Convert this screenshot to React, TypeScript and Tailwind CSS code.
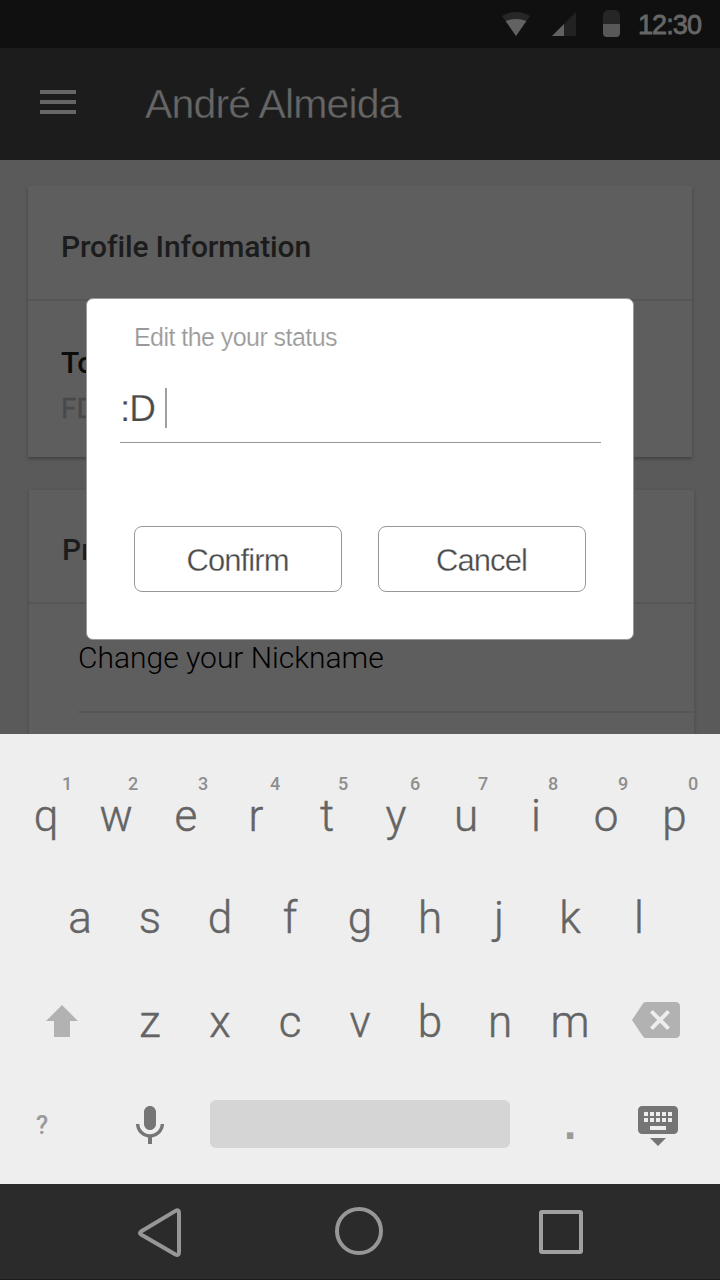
import type { ReactNode } from "react";

const topRow = [
  ["q", "1", "left-[50px]"],
  ["w", "2", "left-[46px]"],
  ["e", "3", "left-[46px]"],
  ["r", "4", "left-[48px]"],
  ["t", "5", "left-[46px]"],
  ["y", "6", "left-[48px]"],
  ["u", "7", "left-[46px]"],
  ["i", "8", "left-[46px]"],
  ["o", "9", "left-[46px]"],
  ["p", "0", "left-[46px]"],
];

function Key({ children, className = "" }: { children: ReactNode; className?: string }) {
  return (
    <div
      className={`relative w-[70px] text-center text-[44px] leading-[102px] font-light text-[#646464] [-webkit-text-stroke:0.45px_#646464] ${className}`}
    >
      {children}
    </div>
  );
}

function StatusBar() {
  return (
    <div className="flex h-12 items-center justify-end bg-[#101010] pr-[18px]">
      <svg width="120" height="48" viewBox="502 0 120 48" className="mr-4">
        <path d="M502 16Q516 8 530 16L516 36Z" fill="#272727" />
        <path d="M505.600 21Q516 17 526.400 21L516 36Z" fill="#626262" />
        <path d="M552 36L576 12V36Z" fill="#222222" />
        <path d="M552 36L564 24V36Z" fill="#626262" />
        <path d="M603 24V16Q603 10 609 10H614Q620 10 620 16V24Z" fill="#262626" />
        <path d="M603 24H620V33Q620 37 616 37H607Q603 37 603 33Z" fill="#585858" />
      </svg>
      <span className="w-[64px] pt-[2px] font-['Liberation_Sans',sans-serif] text-[27px] leading-[46px] tracking-[-0.9px] whitespace-nowrap text-[#666666] [-webkit-text-stroke:0.8px_#666666]">
        12:30
      </span>
    </div>
  );
}

function Keyboard() {
  return (
    <div className="h-[450px] bg-[#eeeeee] pt-[31px]">
      <div className="flex h-[102px] pl-[11px]">
        {topRow.map(([letter, digit, pos]) => (
          <Key key={letter}>
            <span className={letter === "p" ? "mr-[3px]" : letter === "t" ? "ml-[2px]" : ""}>{letter}</span>
            <span
              className={`absolute top-[8px] w-[12px] text-center text-[18px] leading-[22px] font-medium text-[#8e8e8e] [-webkit-text-stroke:0px] ${pos}`}
            >
              {digit}
            </span>
          </Key>
        ))}
      </div>
      <div className="flex h-[102px] pl-[45px]">
        {"asdfghjkl".split("").map((c) => (
          <Key key={c} className={c === "l" || c === "j" ? "pr-[2px]" : ""}>
            {c}
          </Key>
        ))}
      </div>
      <div className="mt-[2px] flex h-[102px] items-center pl-[38px]">
        <svg width="48" height="48" viewBox="0 0 48 48" className="-mt-1 mr-[29px]" fill="#b2b2b2">
          <path d="M24 9L40 25H32V41H16V25H8Z" />
        </svg>
        {"zxcvbnm".split("").map((c) => (
          <Key key={c}>{c}</Key>
        ))}
        <svg width="48" height="48" viewBox="0 0 24 24" className="-mt-1 ml-[27px]" fill="#b2b2b2">
          <path d="M22 3H7c-.69 0-1.23.35-1.59.88L0 12l5.41 8.11c.36.53.9.89 1.59.89h15c1.1 0 2-.9 2-2V5c0-1.1-.9-2-2-2zm-3 12.59L17.59 17 14 13.41 10.41 17 9 15.59 12.59 12 9 8.41 10.41 7 14 10.59 17.59 7 19 8.41 15.41 12 19 15.59z" />
        </svg>
      </div>
      <div className="flex h-[102px] items-center">
        <span className="w-[84px] pt-[3px] text-center text-[25px] font-medium text-[#9a9a9a]">?</span>
        <svg width="48" height="48" viewBox="0 0 24 24" className="mt-1 ml-[42px]" fill="#757575">
          <path d="M12 14c1.66 0 2.99-1.34 2.99-3L15 5c0-1.66-1.34-3-3-3S9 3.34 9 5v6c0 1.66 1.34 3 3 3zm5.3-3c0 3-2.54 5.1-5.3 5.1S6.7 14 6.7 11H5c0 3.41 2.72 6.23 6 6.72V21h2v-3.28c3.28-.48 6-3.3 6-6.72h-1.7z" />
        </svg>
        <div className="ml-9 h-12 w-[300px] rounded-[6px] bg-[#d5d5d5]" />
        <span className="ml-[25px] w-[70px] text-center font-['Liberation_Sans',sans-serif] text-[44px] leading-[98px] font-bold text-[#9a9a9a]">
          .
        </span>
        <svg width="48" height="48" viewBox="0 0 24 24" className="ml-[29px]" fill="#757575">
          <path d="M20 3H4c-1.1 0-1.99.9-1.99 2L2 15c0 1.1.9 2 2 2h16c1.1 0 2-.9 2-2V5c0-1.1-.9-2-2-2zm-9 3h2v2h-2V6zm0 3h2v2h-2V9zM8 6h2v2H8V6zm0 3h2v2H8V9zm-1 2H5V9h2v2zm0-3H5V6h2v2zm9 7H8v-2h8v2zm0-4h-2V9h2v2zm0-3h-2V6h2v2zm3 3h-2V9h2v2zm0-3h-2V6h2v2zm-7 15l4-4H8l4 4z" />
        </svg>
      </div>
    </div>
  );
}

function StatusDialog() {
  return (
    <div className="absolute top-[298px] left-[86px] h-[342px] w-[548px] rounded-[7px] border border-[#999999] bg-white px-[33px] font-['Liberation_Sans',sans-serif]">
      <p className="ml-[14px] pt-[21px] text-[25px] leading-[34px] tracking-[-0.55px] whitespace-nowrap text-[#999999] [-webkit-text-stroke:0.2px_#ffffff]">
        Edit the your status
      </p>
      <div className="mt-[25px] flex h-[64px] w-[481px] items-start border-b border-[#979797] text-[37px] leading-[60px] text-[#4a4a4a]">
        <span className="tracking-[-1px] [-webkit-text-stroke:0.25px_#ffffff]">:D</span>
        <span className="mt-[9px] ml-[10px] h-10 w-[2px] bg-[#a0a0a0]" />
      </div>
      <div className="mt-[83px] ml-[14px] flex gap-9">
        {["Confirm", "Cancel"].map((label) => (
          <button
            key={label}
            className="h-[66px] w-[208px] rounded-[8px] border border-[#979797] pt-[3px] pr-[1px] text-[31px] leading-[61px] tracking-[-0.9px] text-[#4a4a4a]"
          >
            <span className="[-webkit-text-stroke:0.3px_#ffffff]">{label}</span>
          </button>
        ))}
      </div>
    </div>
  );
}

export default function App() {
  return (
    <div className="relative h-[1280px] w-[720px] overflow-hidden bg-[#5a5a5a] font-[Roboto,sans-serif]">
      <StatusBar />
      <header className="flex h-28 items-center bg-[#1c1c1c] pl-10">
        <div className="-mt-1 flex w-9 flex-col gap-[6px]">
          <div className="h-1 bg-[#666666]" />
          <div className="h-1 bg-[#666666]" />
          <div className="h-1 bg-[#666666]" />
        </div>
        <h1 className="ml-[69px] pt-[2px] font-['Liberation_Sans',sans-serif] text-[41px] tracking-[-0.85px] text-[#666666] [-webkit-text-stroke:0.4px_#1c1c1c]">
          André Almeida
        </h1>
      </header>
      <main className="h-[574px] overflow-hidden pt-[26px]">
        <section className="ml-7 h-[271px] w-[664px] bg-[#5e5e5e] shadow-[0_2px_3px_#424242]">
          <h2 className="h-[115px] border-b-2 border-[#565656] pl-[33px] text-[30px] leading-[122px] font-medium tracking-[-0.15px] text-[#1c1c1c]">
            Profile Information
          </h2>
          <p className="pt-[41px] pl-[33px] text-[30px] leading-[42px] font-medium text-[#0c0c0c]">To</p>
          <p className="pl-[33px] text-[28px] leading-[49px] text-[#4a4848] [-webkit-text-stroke:0.3px_#4a4848]">FD</p>
        </section>
        <section className="mt-[33px] ml-[29px] h-[300px] w-[665px] bg-[#5e5e5e] shadow-[0_1px_3px_#484848]">
          <h2 className="h-[114px] border-b-2 border-[#565656] pl-[33px] text-[30px] leading-[120px] font-medium text-[#1c1c1c]">
            Pr
          </h2>
          <p className="ml-[49px] h-[109px] border-b-2 border-[#565656] text-[30px] leading-[107px] font-light text-black">
            Change your Nickname
          </p>
        </section>
      </main>
      <Keyboard />
      <nav className="h-24 border-b border-[#1e1a1e] bg-[#2b2b2b]">
        <svg width="720" height="95" viewBox="0 1184 720 95" fill="none" stroke="#979797" strokeWidth="4">
          <path
            d="M175.500 1210.900Q179 1209 179 1213V1252Q179 1256 175.500 1254.500L141 1234.500Q139 1233 141 1231.500Z"
            strokeLinejoin="round"
          />
          <circle cx="359" cy="1231" r="22" />
          <rect x="541" y="1212" width="40" height="40" rx="1" stroke="#a0a0a0" />
        </svg>
      </nav>
      <StatusDialog />
    </div>
  );
}
